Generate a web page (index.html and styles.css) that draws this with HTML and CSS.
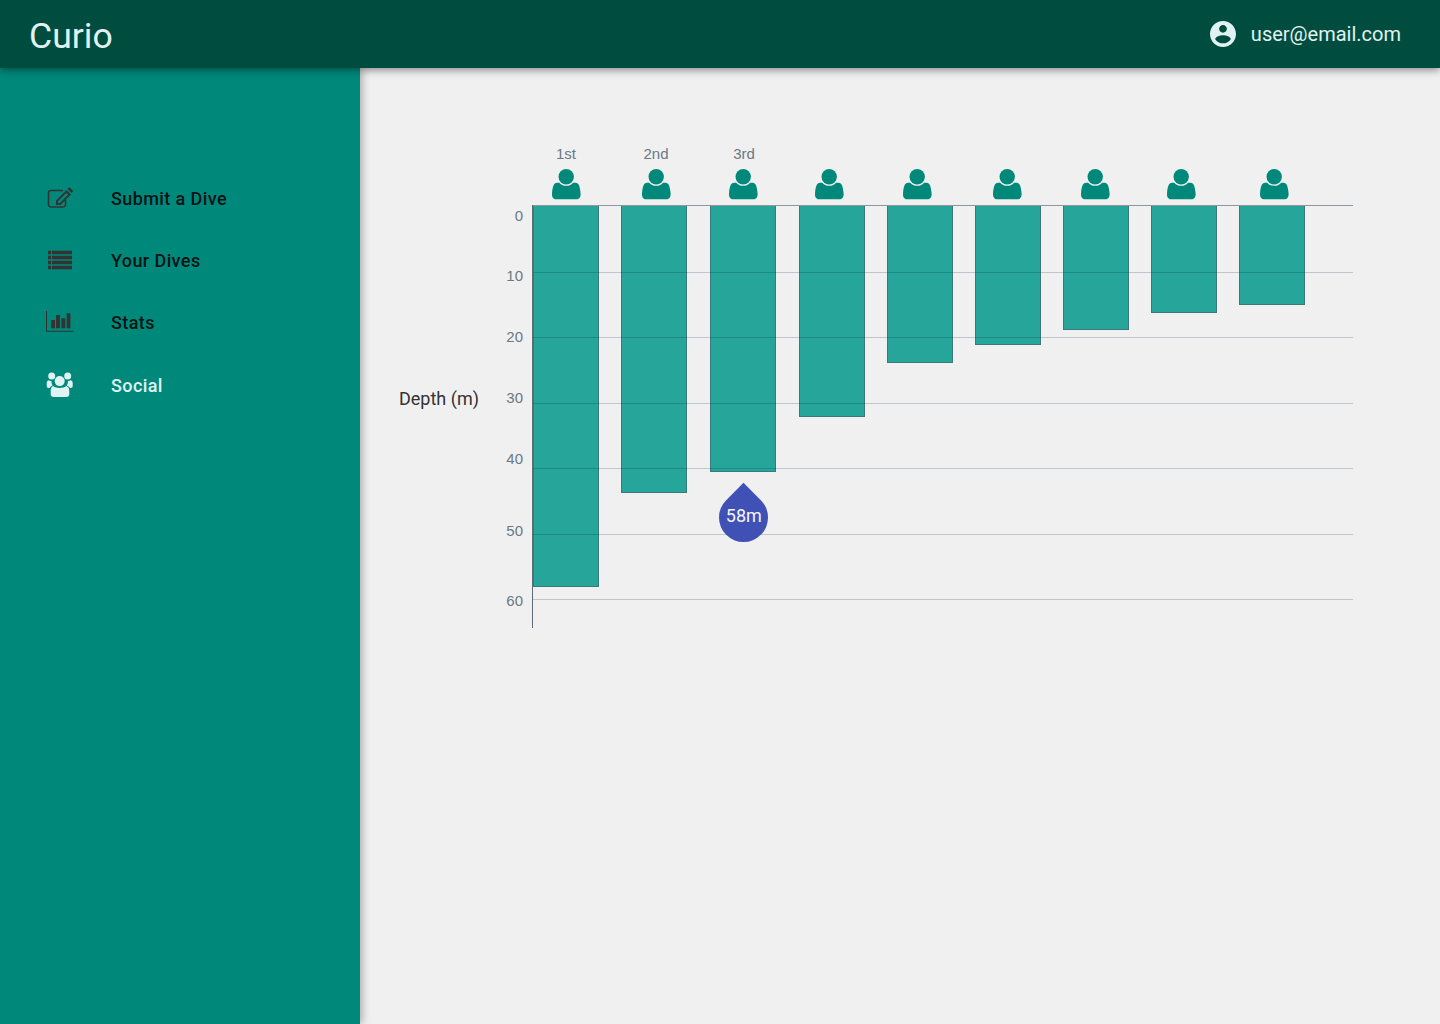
FILE: index.html
```html
<!DOCTYPE html>
<html lang="en">
<head>
<meta charset="utf-8">
<title>Curio</title>
<link rel="stylesheet" href="styles.css">
</head>
<body>
<svg class="defs" width="0" height="0" aria-hidden="true">
  <symbol id="person" viewBox="0 0 28 30" overflow="visible">
    <circle cx="14.200" cy="7.700" r="7.700"/>
    <path d="M7.200 13.700C8.800 15.800 11 16.800 14.200 16.800s5.400-1 7-3.100h2.400C26.800 13.700 28 17.500 28.600 24.500c.3 3.300-1.300 5.800-3.800 5.800H3.800C1.300 30.300-.3 27.800 0 24.500.6 17.500 1.800 13.700 5 13.700z"/>
  </symbol>
</svg>
<header class="topbar">
  <div class="brand">Curio</div>
  <div class="user">
    <svg class="user-icon" viewBox="2 2 20 20"><path d="M12 2C6.480 2 2 6.480 2 12s4.480 10 10 10 10-4.480 10-10S17.520 2 12 2zm0 3c1.660 0 3 1.340 3 3s-1.340 3-3 3-3-1.340-3-3 1.340-3 3-3zm0 14.200c-2.500 0-4.710-1.280-6-3.220.030-1.990 4-3.080 6-3.080 1.990 0 5.970 1.090 6 3.080-1.290 1.940-3.500 3.220-6 3.220z"/></svg>
    <span>user@email.com</span>
  </div>
</header>
<div class="layout">
  <nav class="sidebar">
    <a class="nav-item">
      <svg class="nav-icon" viewBox="0 0 29 25"><path class="stroke" d="M20.500 14v4.500a2.500 2.500 0 0 1-2.500 2.500H6a2.500 2.500 0 0 1-2.500-2.500V7A2.500 2.500 0 0 1 6 4.500h12"/><path fill-rule="evenodd" d="M11 19v-4.500L21.500 4l4.500 4.500L15.500 19zM13 15.200v1.800h1.800l8.200-8.200-1.800-1.800z"/><path d="M22.500 3l1.200-1.200a1 1 0 0 1 1.400 0l2.600 2.600a1 1 0 0 1 0 1.400L26.500 7z"/></svg>
      <span>Submit a Dive</span>
    </a>
    <a class="nav-item">
      <svg class="nav-icon" viewBox="0 -1 29 25"><path d="M3 1.700h3.200v3.600H3zM7 1.700h20v3.600H7zM3 6.700h3.200v3.600H3zM7 6.700h20v3.600H7zM3 11.700h3.200v3.600H3zM7 11.700h20v3.600H7zM3 16.700h3.200v3.600H3zM7 16.700h20v3.600H7z"/></svg>
      <span>Your Dives</span>
    </a>
    <a class="nav-item">
      <svg class="nav-icon" viewBox="0 -1 29 25"><path d="M1 0h1v19.700h26.300v1H1zM6 9h4v8.200H6zM11 4h4v13.200h-4zM16.300 7.200h4v10h-4zM21.700 2.200h3.700v15h-3.700z"/></svg>
      <span>Stats</span>
    </a>
    <a class="nav-item nav-item-light">
      <svg class="nav-icon" viewBox="0 0 29 25"><circle cx="6.700" cy="3.100" r="3.500"/><circle cx="22.700" cy="3.100" r="3.500"/><circle cx="14.700" cy="8.100" r="5"/><path d="M8 13c1.500 1.300 4 2 6.700 2s5.200-.7 6.700-2c2 .5 2.900 2.500 2.900 5v3a3 3 0 0 1-3 3H8.700a3 3 0 0 1-3-3v-3c0-2.500.9-4.500 2.300-5z"/><path d="M3.500 7.200c1 .6 2 .8 3 .7a6.500 6.500 0 0 0 1 4.500c-1.300.5-2.300 1.300-3 2.600h-1a2 2 0 0 1-1.800-2V10c0-1.300.6-2.300 1.800-2.800z"/><path d="M25.900 7.200c-1 .6-2 .8-3 .7a6.500 6.500 0 0 1-1 4.500c1.300.5 2.300 1.300 3 2.600h1a2 2 0 0 0 1.800-2V10c0-1.300-.6-2.300-1.800-2.800z"/></svg>
      <span>Social</span>
    </a>
  </nav>
  <main class="content">
    <div class="chart">
      <div class="axis-title">Depth (m)</div>

      <span class="rank" style="left:206px">1st</span>
      <span class="rank" style="left:296px">2nd</span>
      <span class="rank" style="left:384px">3rd</span>

      <svg class="diver" style="left:192px"><use href="#person"/></svg>
      <svg class="diver" style="left:282px"><use href="#person"/></svg>
      <svg class="diver" style="left:369px"><use href="#person"/></svg>
      <svg class="diver" style="left:455px"><use href="#person"/></svg>
      <svg class="diver" style="left:543px"><use href="#person"/></svg>
      <svg class="diver" style="left:633px"><use href="#person"/></svg>
      <svg class="diver" style="left:721px"><use href="#person"/></svg>
      <svg class="diver" style="left:807px"><use href="#person"/></svg>
      <svg class="diver" style="left:900px"><use href="#person"/></svg>

      <div class="bar" style="left:173px;height:382px"></div>
      <div class="bar" style="left:261px;height:288px"></div>
      <div class="bar" style="left:350px;height:267px"></div>
      <div class="bar" style="left:439px;height:212px"></div>
      <div class="bar" style="left:527px;height:158px"></div>
      <div class="bar" style="left:615px;height:140px"></div>
      <div class="bar" style="left:703px;height:125px"></div>
      <div class="bar" style="left:791px;height:108px"></div>
      <div class="bar" style="left:879px;height:100px"></div>

      <div class="grid grid-top" style="top:137px"></div>
      <div class="grid" style="top:204px"></div>
      <div class="grid" style="top:269px"></div>
      <div class="grid" style="top:335px"></div>
      <div class="grid" style="top:400px"></div>
      <div class="grid" style="top:466px"></div>
      <div class="grid" style="top:531px"></div>
      <div class="y-axis"></div>

      <span class="tick" style="top:139px">0</span>
      <span class="tick" style="top:199px">10</span>
      <span class="tick" style="top:260px">20</span>
      <span class="tick" style="top:321px">30</span>
      <span class="tick" style="top:382px">40</span>
      <span class="tick" style="top:454px">50</span>
      <span class="tick" style="top:524px">60</span>

      <div class="drop"><span>58m</span></div>
    </div>
  </main>
</div>
</body>
</html>
```
FILE: styles.css
```css
* { box-sizing: border-box; }
html, body { height: 100%; }
body {
  margin: 0;
  height: 1024px;
  overflow: hidden;
  display: flex;
  flex-direction: column;
  background: #f0f0f0;
  font-family: Roboto, "Liberation Sans", sans-serif;
}
.defs { position: absolute; }
.topbar {
  position: relative;
  z-index: 3;
  flex: 0 0 68px;
  display: flex;
  align-items: center;
  justify-content: space-between;
  padding: 4px 39px 0 29px;
  background: #004d40;
  color: #e0f2f1;
  box-shadow: 0 2px 8px rgba(0, 0, 0, .45);
}
.brand { font-size: 35.600px; font-weight: 400; }
.user { display: flex; align-items: center; gap: 15px; font-size: 20px; margin-top: -4px; }
.user-icon { width: 26px; height: 26px; fill: #e0f2f1; }
.layout { flex: 1; display: flex; min-height: 0; }
.sidebar {
  position: relative;
  z-index: 2;
  flex: 0 0 360px;
  padding: 99px 0 0 45px;
  display: flex;
  flex-direction: column;
  background: #00897b;
  box-shadow: 2px 0 8px rgba(0, 0, 0, .3);
}
.nav-item {
  height: 62.400px;
  display: flex;
  align-items: center;
  gap: 37px;
  font-size: 18px;
  font-weight: 500;
  letter-spacing: .4px;
  color: rgba(0, 0, 0, .87);
}
.nav-icon { flex: none; width: 29px; height: 25px; fill: #333; overflow: visible; }
.nav-icon .stroke { fill: none; stroke: #333; stroke-width: 1.600; }
.nav-item-light { color: #e0f2f1; }
.nav-item-light .nav-icon { fill: #e0f2f1; }
.content { flex: 1; }
.chart { position: relative; height: 600px; }
.axis-title {
  position: absolute;
  left: 39px;
  top: 319px;
  font-size: 18px;
  line-height: 24px;
  color: #333;
}
.rank, .tick {
  position: absolute;
  font-family: "Liberation Sans", sans-serif;
  font-size: 15px;
  line-height: 18px;
  color: #6b7885;
}
.rank { top: 77px; width: 54px; margin-left: -27px; text-align: center; }
.tick { right: 917px; text-align: right; }
.diver { position: absolute; top: 101px; width: 28px; height: 30px; fill: #00897b; overflow: visible; }
.bar {
  position: absolute;
  top: 137px;
  width: 66px;
  background: #26a69a;
  border: 1px solid #3a7a78;
}
.grid {
  position: absolute;
  left: 172px;
  width: 821px;
  height: 1px;
  background: rgba(0, 30, 50, .2);
}
.grid-top { background: #8f969e; }
.y-axis {
  position: absolute;
  left: 172px;
  top: 137px;
  width: 1px;
  height: 423px;
  background: #5f6b75;
}
.drop {
  position: absolute;
  left: 359px;
  top: 425px;
  width: 49px;
  height: 49px;
  border-radius: 50%;
  border-top-left-radius: 0;
  background: #3f51b5;
  transform: rotate(45deg);
  display: flex;
  align-items: center;
  justify-content: center;
}
.drop span {
  transform: rotate(-45deg) translate(1px, -2px);
  color: #f5f5f5;
  font-size: 18px;
  line-height: 1;
}
```
